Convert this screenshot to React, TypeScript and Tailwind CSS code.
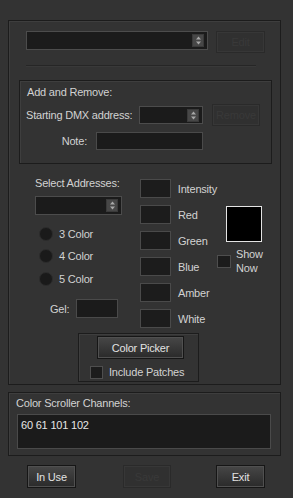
import React from "react";

function Spin() {
  return (
    <div className="w-[12px] h-[13px] bg-[#474747] border border-[#3a3a3a] flex items-center justify-center">
      <svg width="7" height="9" viewBox="0 0 7 9">
        <path d="M3.5 0.5L6 3.5H1z" fill="#a8a8a8" />
        <path d="M3.5 8.5L6 5.5H1z" fill="#a8a8a8" />
      </svg>
    </div>
  );
}

function Combo({ className }: { className: string }) {
  return (
    <div className={`${className} bg-[#1b1b1b] border border-[#4c4c4c] flex items-center justify-end pr-[3px]`}>
      <Spin />
    </div>
  );
}

function Button({ label, disabled, className }: { label: string; disabled?: boolean; className: string }) {
  if (disabled) {
    return (
      <div className={`${className} bg-[#303030] border border-[#2a2a2a] shadow-[inset_0_0_0_1px_#373737] flex items-center justify-center text-[#393939]`}>
        {label}
      </div>
    );
  }
  return (
    <div className={`${className} bg-gradient-to-b from-[#474747] to-[#2a2a2a] border border-[#161616] shadow-[inset_0_0_0_1px_#505050] flex items-center justify-center text-[#e2e2e2]`}>
      {label}
    </div>
  );
}

function Box() {
  return <div className="w-[31px] h-[19px] bg-[#1c1c1c] border border-[#4a4a4a]" />;
}

function Radio({ label, className }: { label: string; className: string }) {
  return (
    <div className={`${className} flex items-center ml-[5px]`}>
      <div className="w-[14px] h-[14px] rounded-full bg-[#1a1a1a] border border-[#2c2c2c]" />
      <span className="ml-[6px] leading-[14px]">{label}</span>
    </div>
  );
}

const channels = ["Intensity", "Red", "Green", "Blue", "Amber", "White"];

export default function App() {
  return (
    <div
      className="w-[293px] h-[498px] bg-[#333333] pt-[20px] px-[8px] flex flex-col text-[11px] tracking-[-0.2px] text-[#d2d2d2] leading-[14px]"
      style={{ fontFamily: '"Liberation Sans", Arial, sans-serif' }}
    >
      {/* main panel */}
      <div className="w-[273px] h-[365px] border border-[#1c1c1c] shadow-[inset_1px_1px_0_#3e3e3e] flex flex-col">
        <div className="mt-[10px] ml-[17px] flex items-start">
          <Combo className="w-[182px] h-[19px]" />
          <Button label="Edit" disabled className="ml-[8px] w-[49px] h-[22px]" />
        </div>
        <div className="mt-[12px] ml-[17px] w-[230px] h-[2px] border-t border-[#262626] border-b border-b-[#393939]" />

        {/* add and remove */}
        <div className="mt-[13px] ml-[10px] w-[253px] h-[84px] border border-[#1c1c1c] shadow-[inset_1px_1px_0_#3e3e3e] flex flex-col">
          <div className="mt-[4px] pl-[7px]">Add and Remove:</div>
          <div className="mt-[5px] pl-[6px] flex items-center">
            <span className="w-[113px]">Starting DMX address:</span>
            <Combo className="w-[64px] h-[18px]" />
            <Button label="Remove" disabled className="ml-[9px] w-[48px] h-[22px]" />
          </div>
          <div className="mt-[6px] flex items-center">
            <span className="w-[67px] text-right">Note:</span>
            <div className="ml-[9px] w-[107px] h-[18px] bg-[#1b1b1b] border border-[#4a4a4a]" />
          </div>
        </div>

        {/* addresses + channels */}
        <div className="flex items-start">
          <div className="ml-[25px] mt-[12px] w-[88px] flex flex-col">
            <span className="pl-[1px]">Select Addresses:</span>
            <Combo className="mt-[6px] ml-[1px] w-[87px] h-[19px]" />
            <Radio label="3 Color" className="mt-[12px]" />
            <Radio label="4 Color" className="mt-[8px]" />
            <Radio label="5 Color" className="mt-[9px]" />
            <div className="mt-[13px] flex items-center">
              <span className="ml-[16px]">Gel:</span>
              <div className="ml-[7px] w-[42px] h-[19px] bg-[#1b1b1b] border border-[#4a4a4a]" />
            </div>
          </div>

          <div className="ml-[18px] mt-[15px] w-[77px] flex flex-col gap-[7px]">
            {channels.map((c) => (
              <div key={c} className="flex items-center">
                <Box />
                <span className="ml-[7px]">{c}</span>
              </div>
            ))}
          </div>

          <div className="mt-[42px] flex flex-col">
            <div className="ml-[9px] w-[36px] h-[36px] bg-black border border-[#e4e4e4]" />
            <div className="mt-[5px] flex items-center">
              <div className="w-[14px] h-[13px] bg-[#1c1c1c] border border-[#4e4e4e]" />
              <div className="ml-[5px] flex flex-col">
                <span>Show</span>
                <span>Now</span>
              </div>
            </div>
          </div>
        </div>

        {/* color picker group */}
        <div className="mt-[5px] ml-[69px] w-[121px] h-[49px] border border-[#1c1c1c] shadow-[inset_1px_1px_0_#3e3e3e] flex flex-col">
          <Button label="Color Picker" className="mt-[2px] ml-[18px] w-[87px] h-[23px]" />
          <div className="mt-[6px] ml-[11px] flex items-center">
            <div className="w-[13px] h-[13px] bg-[#1c1c1c] border border-[#4e4e4e]" />
            <span className="ml-[6px]">Include Patches</span>
          </div>
        </div>
      </div>

      {/* color scroller */}
      <div className="mt-[7px] w-[273px] h-[64px] border border-[#1c1c1c] shadow-[inset_1px_1px_0_#3e3e3e] flex flex-col">
        <div className="mt-[3px] pl-[7px]">Color Scroller Channels:</div>
        <div className="mt-[4px] ml-[8px] w-[254px] h-[35px] bg-[#1b1b1b] border border-[#4a4a4a] pl-[3px] pt-[3px] text-[#e6e6e6]">
          60 61 101 102
        </div>
      </div>

      {/* bottom buttons */}
      <div className="mt-[9px] ml-[19px] flex items-center">
        <Button label="In Use" className="w-[49px] h-[23px]" />
        <Button label="Save" disabled className="ml-[47px] w-[48px] h-[23px]" />
        <Button label="Exit" className="ml-[45px] w-[49px] h-[23px]" />
      </div>
    </div>
  );
}
